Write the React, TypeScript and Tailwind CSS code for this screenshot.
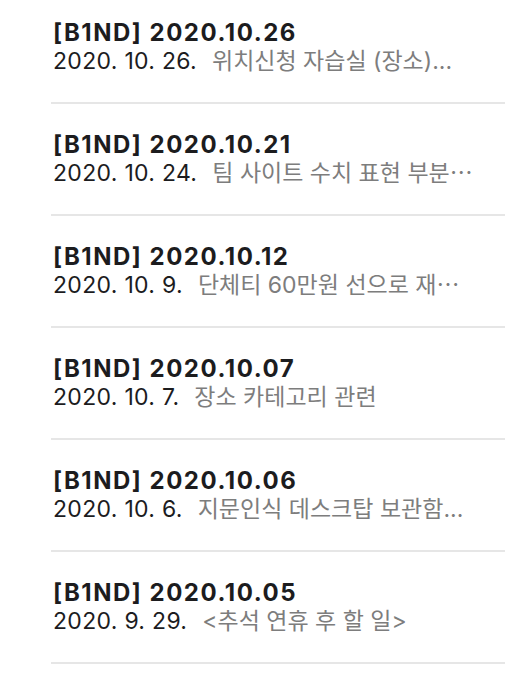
const notes = [
  { title: "[B1ND] 2020.10.26", date: "2020. 10. 26.", preview: "위치신청 자습실 (장소)..." },
  { title: "[B1ND] 2020.10.21", date: "2020. 10. 24.", preview: "팀 사이트 수치 표현 부분⋯" },
  { title: "[B1ND] 2020.10.12", date: "2020. 10. 9.", preview: "단체티 60만원 선으로 재⋯" },
  { title: "[B1ND] 2020.10.07", date: "2020. 10. 7.", preview: "장소 카테고리 관련" },
  { title: "[B1ND] 2020.10.06", date: "2020. 10. 6.", preview: "지문인식 데스크탑 보관함..." },
  { title: "[B1ND] 2020.10.05", date: "2020. 9. 29.", preview: "<추석 연휴 후 할 일>" },
];

export default function App() {
  return (
    <div
      className="min-h-[674px] w-[528px] bg-white"
      style={{ fontFamily: "Inter, 'Noto Sans CJK KR', sans-serif" }}
    >
      <ul className="pl-[51px] pr-[23px]">
        {notes.map((note) => (
          <li key={note.title} className="h-[112px] pt-[18px]">
            <div className="border-b-2 border-[#e6e6e6] pb-[26px]">
              <div className="pl-[2px] text-[24px] leading-[29px] font-bold tracking-[1.5px] text-[#1c1c1e]">
                {note.title}
              </div>
              <div className="flex gap-[15px] whitespace-nowrap pl-[2px] text-[23px] leading-[29px]">
                <span className="tracking-[0.3px] text-[#1c1c1e]">{note.date}</span>
                <span className="text-[#7d7d7d]">{note.preview}</span>
              </div>
            </div>
          </li>
        ))}
      </ul>
    </div>
  );
}
